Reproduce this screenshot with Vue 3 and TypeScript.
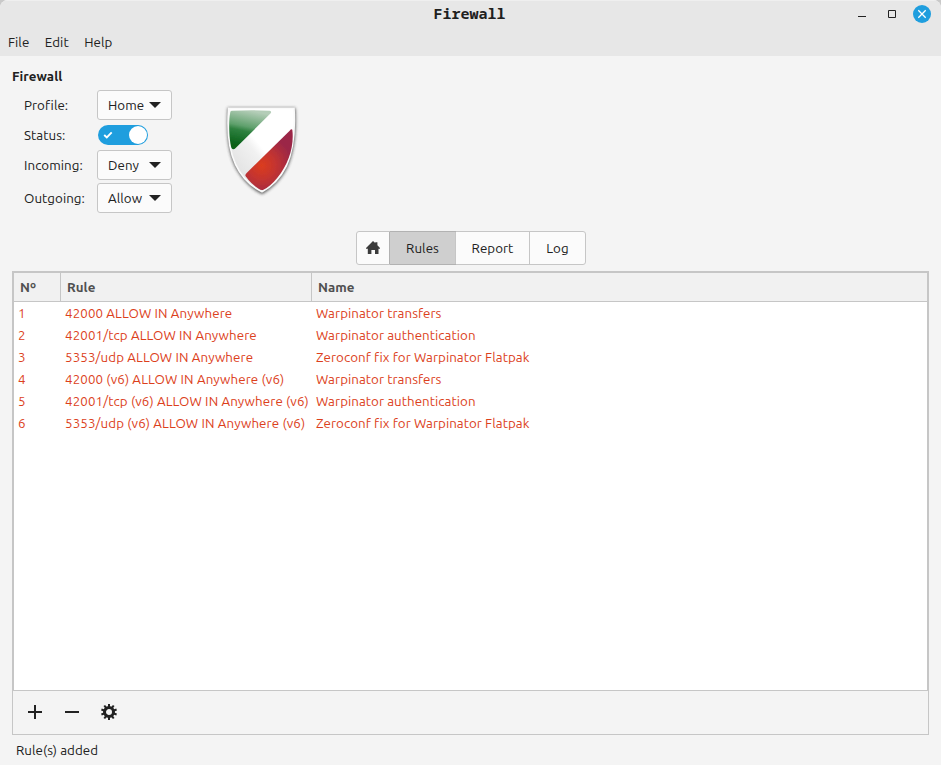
<script setup lang="ts">
import { ref } from 'vue'

interface Rule { id: number; rule: string; name: string }

const menus: string[] = ['File', 'Edit', 'Help']

const rules: Rule[] = [
  { id: 1, rule: '42000 ALLOW IN Anywhere', name: 'Warpinator transfers' },
  { id: 2, rule: '42001/tcp ALLOW IN Anywhere', name: 'Warpinator authentication' },
  { id: 3, rule: '5353/udp ALLOW IN Anywhere', name: 'Zeroconf fix for Warpinator Flatpak' },
  { id: 4, rule: '42000 (v6) ALLOW IN Anywhere (v6)', name: 'Warpinator transfers' },
  { id: 5, rule: '42001/tcp (v6) ALLOW IN Anywhere (v6)', name: 'Warpinator authentication' },
  { id: 6, rule: '5353/udp (v6) ALLOW IN Anywhere (v6)', name: 'Zeroconf fix for Warpinator Flatpak' },
]

const enabled = ref(true)
const activeTab = ref('Rules')
const teeth = [0, 36, 72, 108, 144, 180, 216, 252, 288, 324]
</script>

<template>
  <div class="window">
    <header class="titlebar">
      <h1>Firewall</h1>
      <div class="controls">
        <svg width="10" height="20" viewBox="0 0 10 20"><path d="M1 12.5h8" stroke="#222" /></svg>
        <svg width="10" height="20" viewBox="0 0 10 20"><path d="M1.5 6.5h7v7h-7z" fill="none" stroke="#222" /></svg>
        <svg class="close" width="18" height="18" viewBox="0 0 18 18"><circle cx="9" cy="9" r="9" fill="#1f9ede" /><path d="M5.3 5.3l7.4 7.4M12.7 5.3l-7.4 7.4" stroke="#fff" stroke-width="1.3" /></svg>
      </div>
    </header>
    <nav class="menubar">
      <span v-for="m in menus" :key="m">{{ m }}</span>
    </nav>

    <main>
      <section class="settings">
        <div class="form">
          <h2>Firewall</h2>
          <div class="field"><label>Profile:</label>
            <button class="select"><span>Home</span><svg width="12" height="6" viewBox="0 0 12 6"><path d="M0 0h12L6 6z" /></svg></button>
          </div>
          <div class="field"><label>Status:</label>
            <button class="switch" :class="{ on: enabled }" @click="enabled = !enabled">
              <svg width="10" height="8" viewBox="0 0 10 8"><path d="M1.2 4l2.6 2.5L8.7 1.4" fill="none" stroke="#fff" stroke-width="1.9" /></svg>
              <i></i>
            </button>
          </div>
          <div class="field"><label>Incoming:</label>
            <button class="select"><span>Deny</span><svg width="12" height="6" viewBox="0 0 12 6"><path d="M0 0h12L6 6z" /></svg></button>
          </div>
          <div class="field last"><label>Outgoing:</label>
            <button class="select"><span>Allow</span><svg width="12" height="6" viewBox="0 0 12 6"><path d="M0 0h12L6 6z" /></svg></button>
          </div>
        </div>

        <svg class="shield" width="95" height="110" viewBox="0 0 285 330">
          <defs>
            <linearGradient id="base" x1="0" y1="1" x2="0.8" y2="0.2">
              <stop offset="0" stop-color="#d8d8d8" /><stop offset="0.55" stop-color="#f1f1f1" /><stop offset="0.65" stop-color="#fff" />
            </linearGradient>
            <radialGradient id="red" gradientUnits="userSpaceOnUse" cx="140" cy="212" r="92">
              <stop offset="0" stop-color="#db3c1e" /><stop offset="0.45" stop-color="#c43430" /><stop offset="1" stop-color="#9b2747" />
            </radialGradient>
            <linearGradient id="green" gradientUnits="userSpaceOnUse" x1="90" y1="44" x2="68" y2="150">
              <stop offset="0" stop-color="#b4cdb8" /><stop offset="0.45" stop-color="#5fa06c" /><stop offset="0.58" stop-color="#2f8140" /><stop offset="1" stop-color="#086018" />
            </linearGradient>
            <filter id="shadow" x="-20%" y="-20%" width="140%" height="140%"><feGaussianBlur stdDeviation="4" /></filter>
            <filter id="soft"><feGaussianBlur stdDeviation="1.6" /></filter>
          </defs>
          <path d="M38 38H241C245 92 241 164 218 216C201 251 172 281 141 298C105 281 75 247 58 211C35 160 34 92 38 38z" fill="#333" opacity="0.75" filter="url(#shadow)" />
          <path d="M41 40H237C240 92 236 164 214 213C197 247 170 275 141 290C108 274 78 243 62 209C39 160 37 92 41 40z" fill="url(#base)" stroke="#fafafa" stroke-width="5" />
          <path d="M51 47Q110 44 164 47Q171 49 167 55L62 159Q55 166 50 160C44 145 39 85 46 51Q47 47 51 47z" fill="url(#green)" filter="url(#soft)" />
          <path d="M232 104C238 153 221 208 187 248Q165 275 145 284Q139 287 131 281Q108 267 92 244Q89 240 95 234L224 107Q229 101 232 104z" fill="url(#red)" filter="url(#soft)" />
        </svg>
      </section>

      <div class="tabs">
        <button class="home"><svg width="14" height="13" viewBox="0 0 14 13"><path d="M7 0l2.2 2.1V1.3h2.2v3L14 7v.7h-1.5V13H9V9H5.4v4H1.8V7.7H0V7z" fill="#3c3c3c" /></svg></button>
        <button class="tab-rules" :class="{ active: activeTab === 'Rules' }" @click="activeTab = 'Rules'">Rules</button>
        <button class="tab-report" :class="{ active: activeTab === 'Report' }" @click="activeTab = 'Report'">Report</button>
        <button class="tab-log" :class="{ active: activeTab === 'Log' }" @click="activeTab = 'Log'">Log</button>
      </div>

      <section class="table">
        <div class="row head"><div>Nº</div><div>Rule</div><div>Name</div></div>
        <div v-for="r in rules" :key="r.id" class="row">
          <div>{{ r.id }}</div>
          <div class="rule">{{ r.rule }}</div>
          <div>{{ r.name }}</div>
        </div>
      </section>
      <div class="toolbar">
        <svg width="16" height="16" viewBox="0 0 16 16"><path d="M1 8h14M8 1v14" stroke="#222" stroke-width="2" /></svg>
        <svg width="16" height="16" viewBox="0 0 16 16"><path d="M1 8h14" stroke="#222" stroke-width="2" /></svg>
        <svg width="16" height="16" viewBox="0 0 16 16">
          <circle cx="8" cy="8" r="4.5" fill="none" stroke="#222" stroke-width="3" />
          <path v-for="a in teeth" :key="a" d="M7 0h2v3H7z" fill="#222" :transform="`rotate(${a} 8 8)`" />
        </svg>
      </div>
      <footer>Rule(s) added</footer>
    </main>
  </div>
</template>

<style>
body { margin: 0; background: #c9c9c9; }
</style>

<style scoped>
* { box-sizing: border-box; }
.window {
  width: 941px; height: 765px; display: flex; flex-direction: column; overflow: hidden;
  background: #f4f4f4; color: #202020; border-radius: 8px 8px 0 0;
  font: 13.333px/21px Ubuntu, "Noto Sans", sans-serif; letter-spacing: 0.055px;
}
button { font: inherit; letter-spacing: inherit; color: inherit; padding: 0; }
svg { display: block; flex: none; }
.titlebar { height: 28px; flex: none; background: #e7e7e7; border-top: 1px solid #efefef; display: grid; grid-template-columns: 1fr auto 1fr; align-items: center; }
h1 { grid-column: 2; margin: 0 2px 4px 0; font: bold 15px/20px "Noto Sans Mono", "DejaVu Sans Mono", monospace; letter-spacing: 0; }
.controls { display: flex; align-items: center; justify-content: flex-end; gap: 20px; padding: 0 10px 1px 0; }
.close { margin-left: -4px; }
.menubar { height: 28px; flex: none; display: flex; gap: 15.5px; align-items: center; padding-left: 8px; background: #e7e7e7; }
main { display: flex; flex-direction: column; padding: 0 12px; }
.settings { display: flex; height: 175px; }
.form { width: 203px; padding-top: 10px; }
h2 { margin: 0 0 3px; font-size: inherit; line-height: 21px; font-weight: bold; }
.field { display: flex; align-items: center; padding-left: 12px; height: 30px; }
.field label { width: 73px; }
.field.last { margin-top: 3px; }
.select { width: 75px; height: 30px; display: flex; align-items: center; justify-content: space-between; padding: 0 10px; background: #fbfbfb; border: 1px solid #c6c6c6; border-radius: 3px; }
.select svg { fill: #222; }
.switch { width: 50px; height: 20px; margin-left: 1px; border: 0; border-radius: 10px; background: #bbb; display: flex; align-items: center; justify-content: space-between; padding: 0 1px 0 5px; }
.switch.on { background: #1f9ede; }
.switch i { width: 18px; height: 18px; border-radius: 50%; background: #fff; }
.shield { margin-top: 39px; }
.tabs { align-self: center; display: flex; height: 34px; border: 1px solid #c6c6c6; border-radius: 3px; background: #fbfbfb; }
.tabs button { border: 0; border-right: 1px solid #c6c6c6; background: transparent; display: flex; align-items: center; justify-content: center; padding-left: 1px; }
.tabs .home { width: 33px; border-right-color: #b2b2b2; padding: 0 0 1px 1px; }
.tabs .tab-rules { width: 66px; }
.tabs .tab-report { width: 74px; }
.tabs .tab-log { width: 55px; border-right: 0; }
.tabs .active { background: #cfcfcf; box-shadow: 0 -1px #b2b2b2, 0 1px #b2b2b2; }
.table { margin-top: 6px; height: 419px; background: #fff; border: 2px solid #c6c6c6; border-bottom: 0; }
.row { display: grid; grid-template-columns: 47px 251px 1fr; height: 22px; line-height: 23px; color: #dc3f1c; }
.row > div { padding-left: 4px; white-space: nowrap; }
.row > .rule { letter-spacing: 0.115px; }
.head { height: 29px; line-height: 29px; background: #f1f1f1; color: #505050; font-weight: bold; border-bottom: 1px solid #c6c6c6; }
.head > div { height: 28px; padding-left: 6px; border-right: 1px solid #c6c6c6; }
.head > div:last-child { border-right: 0; }
.toolbar { height: 45px; border: 1px solid #c6c6c6; display: flex; align-items: center; gap: 21px; padding: 0 0 2px 14px; }
footer { height: 30px; padding-left: 4px; line-height: 31px; }
</style>
